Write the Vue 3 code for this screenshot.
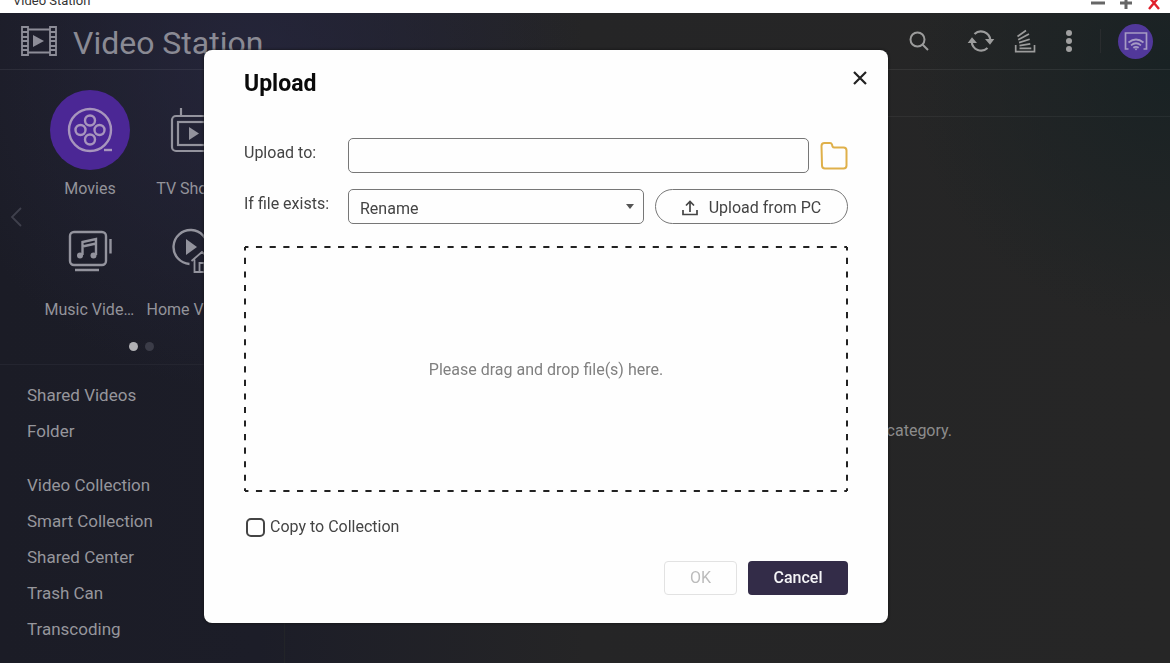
<script setup>
import { ref } from 'vue'

const target = ref('')
const policy = ref('Rename')
const copy = ref(false)
const categories = [
  { id: 'movies', label: 'Movies', active: true },
  { id: 'tv', label: 'TV Shows' },
  { id: 'music', label: 'Music Videos' },
  { id: 'home', label: 'Home Videos' }
]
const groups = [
  ['Shared Videos', 'Folder'],
  ['Video Collection', 'Smart Collection', 'Shared Center', 'Trash Can', 'Transcoding']
]
</script>

<template>
  <div class="app">
    <div class="titlebar">
      <span class="window-name">Video Station</span>
      <div class="window-buttons">
        <button type="button" aria-label="Minimize">
          <svg width="14" height="14" viewBox="0 0 14 14"><path d="M0 7H14" stroke="#666" stroke-width="3" /></svg>
        </button>
        <button type="button" aria-label="Maximize">
          <svg width="14" height="14" viewBox="0 0 14 14"><path d="M1 7H13M7 1V13" stroke="#666" stroke-width="3" /></svg>
        </button>
        <button type="button" aria-label="Close window">
          <svg width="14" height="14" viewBox="0 0 14 14"><path d="M2 1L12 13M12 1L2 13" stroke="#e0202c" stroke-width="2.4" /></svg>
        </button>
      </div>
    </div>

    <header class="header">
      <svg class="logo" width="36" height="30" viewBox="0 0 36 30" fill="none" stroke="#8d8d98" stroke-width="1.8">
        <path d="M1 1H7V29H1ZM29 1H35V29H29ZM7 3.5H29M7 26.5H29" />
        <path d="M1 6H7M1 11H7M1 15H7M1 20H7M1 24H7M29 6H35M29 11H35M29 15H35M29 20H35M29 24H35" />
        <path d="M12 9L23 15L12 21Z" fill="#8d8d98" stroke="none" />
      </svg>
      <h1>Video Station</h1>
      <div class="tools">
        <button type="button" class="tool search" aria-label="Search">
          <svg width="22" height="22" viewBox="0 0 22 22" fill="none" stroke="#9c9c9c" stroke-width="2"><circle cx="9.5" cy="9.5" r="7" /><path d="M14.5 14.5L20 20" /></svg>
        </button>
        <button type="button" class="tool" aria-label="Refresh">
          <svg width="28" height="24" viewBox="0 0 28 24" fill="none" stroke="#9c9c9c" stroke-width="2.2">
            <path d="M7.5 5A9.4 9.4 0 0 1 23.3 11M20.5 19A9.4 9.4 0 0 1 4.7 13" />
            <path d="M18 10H27.3L23 15.8ZM10 14H.7L5 8.2Z" fill="#9c9c9c" stroke="none" />
          </svg>
        </button>
        <button type="button" class="tool" aria-label="Background tasks">
          <svg width="22" height="24" viewBox="0 0 22 24" fill="none" stroke="#9c9c9c" stroke-width="1.7">
            <path d="M1.7 16V22.7H20.5V16" />
            <path d="M3.5 7.5L12 1.5M4.2 10.8L15 5M5 13.6L15.7 10.2M5.5 16.6L16.3 14.8M5.5 19.4H17.3" />
          </svg>
        </button>
        <button type="button" class="tool" aria-label="More">
          <svg width="8" height="24" viewBox="0 0 8 24" fill="#a0a0a0"><circle cx="4" cy="4" r="3" /><circle cx="4" cy="12" r="3" /><circle cx="4" cy="20" r="3" /></svg>
        </button>
        <span class="separator"></span>
        <button type="button" class="cast" aria-label="Cast">
          <svg width="24" height="20" viewBox="0 0 24 20" fill="none" stroke="#a79bc4" stroke-width="1.7">
            <path d="M4.5 18H1.5V2H22.5V18H19.5" />
            <path d="M4.5 11.5Q12 5.5 19.5 11.5M7 14.3Q12 10.2 17 14.3M9.3 16.8Q12 14.8 14.7 16.8" />
            <path d="M10.3 17.5H13.7L12 19.5Z" fill="#a79bc4" stroke="none" />
          </svg>
        </button>
      </div>
    </header>

    <div class="body">
      <aside class="sidebar">
        <button type="button" class="previous" aria-label="Previous">
          <svg width="12" height="20" viewBox="0 0 12 20" fill="none" stroke="#3f404c" stroke-width="1.8"><path d="M11 1L2 10L11 19" /></svg>
        </button>
        <div class="categories">
          <button v-for="c in categories" :key="c.id" type="button" class="category">
            <span class="disc" :class="{ active: c.active }">
              <svg v-if="c.id === 'movies'" width="46" height="46" viewBox="0 0 46 46" fill="none" stroke="#a795bd" stroke-width="2.4">
                <circle cx="23" cy="23" r="21" /><circle cx="23" cy="13.5" r="5" /><circle cx="23" cy="32.5" r="5" /><circle cx="13.5" cy="23" r="5" /><circle cx="32.5" cy="23" r="5" /><path d="M37 43H45" />
              </svg>
              <svg v-else-if="c.id === 'tv'" width="44" height="46" viewBox="0 0 44 46" fill="none" stroke="#93939d" stroke-width="2.2">
                <rect x="2" y="9" width="40" height="35" rx="4" /><rect x="8" y="15" width="28" height="23" /><path d="M11 1V9" /><path d="M19 20L29 26.5L19 33Z" fill="#93939d" stroke="none" />
              </svg>
              <svg v-else-if="c.id === 'music'" width="44" height="42" viewBox="0 0 44 42" fill="none" stroke="#93939d" stroke-width="2.4">
                <rect x="2" y="2" width="36" height="33" rx="4" /><path d="M42.5 9V23.5M7 40H31" /><path d="M14.5 25V12L28 9V25M14.5 16.5L28 13.5" /><circle cx="12" cy="25.5" r="3" fill="#93939d" stroke="none" /><circle cx="25.5" cy="25.5" r="3" fill="#93939d" stroke="none" />
              </svg>
              <svg v-else width="42" height="46" viewBox="0 0 42 46" fill="none" stroke="#93939d" stroke-width="2.4">
                <path d="M18.5 36A17 17 0 1 1 36.5 20" /><path d="M15 11L26 19L15 27Z" fill="#93939d" stroke="none" /><path d="M20.5 33L31 24L41.5 33M23.5 31.5V44H38.5V31.5M28.5 44V35H33.5V44" stroke-width="1.8" />
              </svg>
            </span>
            <span class="caption">{{ c.label }}</span>
          </button>
        </div>
        <div class="pager"><span class="dot current"></span><span class="dot"></span></div>
        <nav class="links">
          <ul v-for="(g, i) in groups" :key="i">
            <li v-for="name in g" :key="name"><a href="#">{{ name }}</a></li>
          </ul>
        </nav>
      </aside>
      <main class="content">
        <div class="toolbar"></div>
        <p class="empty">category.</p>
      </main>
    </div>

    <div class="overlay">
      <section class="dialog" role="dialog" aria-labelledby="dialog-title">
        <div class="dialog-head">
          <h2 id="dialog-title">Upload</h2>
          <button type="button" class="close" aria-label="Close">
            <svg width="14" height="14" viewBox="0 0 14 14"><path d="M1 1L13 13M13 1L1 13" stroke="#222" stroke-width="2.2" /></svg>
          </button>
        </div>
        <div class="row">
          <label for="target">Upload to:</label>
          <input id="target" v-model="target" type="text" class="field">
          <button type="button" class="folder" aria-label="Browse folders">
            <svg width="28" height="30" viewBox="0 0 28 30" fill="none" stroke="#dfb04a" stroke-width="2"><path d="M1.5 5Q1.5 2 4.5 2H10Q11.5 2 12 3.5L12.500 5.500Q13 6.500 14.500 6.500H23.500Q26.500 6.500 26.500 9.500V24.500Q26.500 27.500 23.500 27.500H5Q2 27.500 2 24.500Z" /></svg>
          </button>
        </div>
        <div class="row">
          <label for="policy">If file exists:</label>
          <div class="select-wrap">
            <select id="policy" v-model="policy" class="field"><option>Rename</option></select>
            <svg class="caret" width="8" height="5" viewBox="0 0 8 5"><path d="M0 0H8L4 5Z" fill="#555" /></svg>
          </div>
          <button type="button" class="pick">
            <svg width="16" height="16" viewBox="0 0 16 16" fill="none" stroke="#444" stroke-width="1.7"><path d="M1 10V14.5H15V10M8 12V2M4 5.5L8 1.5L12 5.5" /></svg>
            Upload from PC
          </button>
        </div>
        <div class="drop">
          <svg class="dashes" aria-hidden="true">
            <line x1="0" y1="0" x2="100%" y2="0" pathLength="880" />
            <line x1="0" y1="100%" x2="100%" y2="100%" pathLength="880" />
            <line x1="0" y1="0" x2="0" y2="100%" pathLength="360" />
            <line x1="100%" y1="0" x2="100%" y2="100%" pathLength="360" />
          </svg>
          <p>Please drag and drop file(s) here.</p>
        </div>
        <label class="check"><input v-model="copy" type="checkbox">Copy to Collection</label>
        <div class="actions">
          <button type="button" class="action ok" disabled>OK</button>
          <button type="button" class="action cancel">Cancel</button>
        </div>
      </section>
    </div>
  </div>
</template>

<style>
body {
  margin: 0;
  overflow: hidden;
}
</style>

<style scoped>
.app {
  display: flex;
  flex-direction: column;
  height: 100vh;
  overflow: hidden;
  font-family: Roboto, "Liberation Sans", sans-serif;
  font-size: 16px;
  line-height: 20px;
  color: #93939a;
  background:
    radial-gradient(circle at 100% 10%, #192224 0, transparent 20%),
    radial-gradient(circle at 22% 10%, rgba(39, 39, 62, 0.8) 0, transparent 30%),
    linear-gradient(90deg, #1b1c26 0, #1c1d28 22%, #252526 50%, #262626 100%);
}
* {
  box-sizing: border-box;
}
button {
  display: flex;
  align-items: center;
  justify-content: center;
  padding: 0;
  border: 0;
  background: none;
  color: inherit;
  font: inherit;
}
svg {
  display: block;
  flex: none;
}
h1, h2, p, ul {
  margin: 0;
  padding: 0;
  font-weight: 400;
}
.titlebar {
  display: flex;
  flex: none;
  align-items: flex-end;
  justify-content: space-between;
  height: 13px;
  padding: 0 9px 3px 13px;
  overflow: hidden;
  background: #fff;
  color: #333;
  font-size: 13px;
}
.window-name {
  line-height: 18px;
}
.window-buttons {
  display: flex;
  gap: 14px;
}
.header {
  display: flex;
  flex: none;
  align-items: center;
  height: 57px;
  padding: 0 17px 0 21px;
  border-bottom: 1px solid rgba(255, 255, 255, 0.07);
}
h1 {
  margin-left: 16px;
  padding-top: 4px;
  font-size: 32px;
  line-height: 40px;
  color: #8a8a94;
}
.tools {
  display: flex;
  align-items: center;
  margin-left: auto;
}
.tool {
  width: 44px;
  height: 32px;
}
.search {
  margin-right: 18px;
}
.separator {
  width: 1px;
  height: 24px;
  margin: 0 17px 0 9px;
  background: #292c2e;
}
.cast {
  width: 35px;
  height: 35px;
  border-radius: 50%;
  background: #51389a;
}
.body {
  display: flex;
  flex: 1;
  min-height: 0;
}
.sidebar {
  position: relative;
  flex: none;
  width: 285px;
  border-right: 1px solid #222428;
}
.previous {
  position: absolute;
  top: 137px;
  left: 10px;
}
.categories {
  display: grid;
  grid-template-columns: 102px 102px;
  justify-content: start;
  row-gap: 12px;
  padding: 20px 0 0 39px;
}
.category {
  flex-direction: column;
  gap: 9px;
}
.disc {
  display: flex;
  align-items: center;
  justify-content: center;
  width: 80px;
  height: 80px;
  border-radius: 50%;
}
.disc.active {
  background: #4b2795;
}
.caption {
  max-width: 91px;
  overflow: hidden;
  text-overflow: ellipsis;
  white-space: nowrap;
}
.pager {
  display: flex;
  justify-content: center;
  gap: 7px;
  margin-top: 22px;
  padding: 0 2px 13px 0;
  border-bottom: 1px solid #242530;
}
.dot {
  width: 9px;
  height: 9px;
  border-radius: 50%;
  background: #3b3c48;
}
.dot.current {
  background: #b0b0b4;
}
.links {
  padding: 12px 27px;
  font-size: 17px;
  line-height: 36px;
}
.links ul {
  margin-bottom: 18px;
  list-style: none;
}
.links a {
  color: #96969c;
  text-decoration: none;
}
.content {
  flex: 1;
}
.toolbar {
  height: 47px;
  border-bottom: 1px solid rgba(255, 255, 255, 0.05);
}
.empty {
  padding: 304px 218px 0 0;
  text-align: right;
  color: #8c8c8c;
}
.overlay {
  position: fixed;
  inset: 0;
  display: flex;
  align-items: flex-start;
  justify-content: center;
  padding: 50px 78px 0 0;
}
.dialog {
  width: 684px;
  padding: 18px 40px 28px;
  border-radius: 8px;
  background: #fefefe;
  color: #444;
  box-shadow: 0 0 3px #111;
}
.dialog-head {
  display: flex;
  justify-content: space-between;
  margin: 0 -19px 38px 0;
}
h2 {
  font-size: 23px;
  font-weight: 700;
  line-height: 32px;
  color: #0a0a0a;
}
.close {
  width: 14px;
  height: 20px;
}
.row {
  display: flex;
  margin: 0 0 16px;
}
.row > label {
  flex: none;
  width: 104px;
  line-height: 30px;
}
.field {
  flex: 1;
  min-width: 0;
  width: 100%;
  height: 35px;
  padding: 4px 11px 0;
  border: 1px solid #777;
  border-radius: 5px;
  background: transparent;
  color: #444;
  font: inherit;
  appearance: none;
}
.folder {
  width: 28px;
  margin-left: 11px;
}
.select-wrap {
  position: relative;
  display: flex;
  flex: 1;
}
.caret {
  position: absolute;
  top: 15px;
  right: 10px;
  pointer-events: none;
}
.pick {
  gap: 11px;
  width: 193px;
  height: 35px;
  padding-top: 2px;
  margin-left: 11px;
  border: 1px solid #777;
  border-radius: 18px;
}
.drop {
  position: relative;
  display: flex;
  align-items: center;
  justify-content: center;
  height: 244px;
  margin: 23px 1px 0;
  padding-top: 2px;
  color: #808080;
}
.dashes {
  position: absolute;
  inset: 0;
  width: 100%;
  height: 100%;
  overflow: visible;
  stroke: #222;
  stroke-width: 2px;
  stroke-dasharray: 9 11;
  stroke-dashoffset: 4px;
}
.check {
  display: flex;
  align-items: center;
  gap: 5px;
  margin: 26px 0 24px 2px;
}
.check input {
  width: 19px;
  height: 19px;
  margin: 0;
  border: 2px solid #444;
  border-radius: 5px;
  appearance: none;
}
.check input:checked {
  background: #444;
}
.actions {
  display: flex;
  justify-content: flex-end;
  gap: 11px;
}
.action {
  height: 34px;
  border-radius: 4px;
}
.ok {
  width: 73px;
  border: 1px solid #e2e2e2;
  color: #bbb;
}
.cancel {
  width: 100px;
  background: #332c48;
  color: #f4f4f6;
  font-weight: 500;
}
</style>
